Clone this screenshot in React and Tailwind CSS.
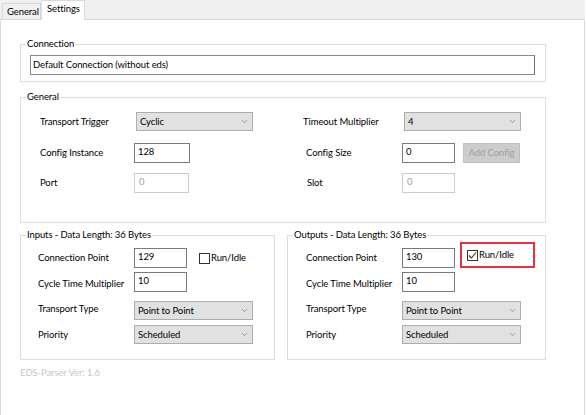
import { ChevronDown } from 'lucide-react'

function Group({ label, className, children }) {
    return (
        <div className={`relative border border-[#dcdcdc] ${className}`}>
            <span className="absolute -top-[8px] left-[5px] bg-white px-px leading-[14px]">{label}</span>
            {children}
        </div>
    )
}

function Select({ value, className }) {
    return (
        <div className={`h-[19px] flex items-center justify-between bg-[#e1e1e1] border border-[#adadad] pl-[3px] pr-[3px] ${className}`}>
            <span>{value}</span>
            <ChevronDown size={9} strokeWidth={1.5} className="text-[#606060]" />
        </div>
    )
}

function Field({ value, disabled, className }) {
    return (
        <div className={`h-[20px] bg-white border leading-[14px] pt-[1px] ${disabled ? 'border-[#cccccc] text-[#a3a3a3] pl-[4px]' : 'border-[#7a7a7a] pl-[3px]'} ${className}`}>
            {value}
        </div>
    )
}

function Check({ checked }) {
    return (
        <div className="flex items-center gap-[1px]">
            <div className="w-[11px] h-[11px] border border-[#333333] bg-white flex items-center justify-center">
                {checked && (
                    <svg width="9" height="9" viewBox="0 0 9 9" fill="none">
                        <path d="M1 4.5 L3.5 7 L8 1.5" stroke="#333333" strokeWidth="1.1" />
                    </svg>
                )}
            </div>
            <span>Run/Idle</span>
        </div>
    )
}

export default function App() {
    return (
        <div className="w-[586px] h-[415px] bg-white text-black text-[9.5px] tracking-[-0.1px] leading-[14px] whitespace-nowrap font-['Lato','Noto_Sans',sans-serif] flex flex-col">
            {/* tabs */}
            <div className="h-[20px] bg-[#f0f0f0] border-b border-[#d9d9d9] flex items-end pl-[2px] w-[585px]">
                <div className="h-[16px] w-[39px] pl-[4px] border border-b-0 border-[#d9d9d9] bg-[#f0f0f0] leading-[15px]">General</div>
                <div className="h-[20px] w-[44px] -mb-px pl-[5px] border border-b-0 border-[#d9d9d9] bg-white leading-[16px]">Settings</div>
            </div>

            <div className="flex-1 w-[585px] border-l border-r border-[#d9d9d9] pl-[19px] pt-[24px]">
                <Group label="Connection" className="w-[526px] h-[38px]">
                    <div className="mt-[10px] ml-[9px] w-[505px] h-[20px] border border-[#8a8a8a] border-r-[#6e6e6e] pl-[2px] pt-[2px]">
                        Default Connection (without eds)
                    </div>
                </Group>

                <Group label="General" className="w-[526px] h-[126px] mt-[15px]">
                    <div className="pl-[19px] pt-[14px] flex flex-col">
                        <div className="flex items-center">
                            <div className="w-[263px] flex items-center">
                                <span className="w-[96px]">Transport Trigger</span>
                                <Select value="Cyclic" className="w-[117px]" />
                            </div>
                            <span className="w-[101px]">Timeout Multiplier</span>
                            <Select value="4" className="w-[117px]" />
                        </div>
                        <div className="flex items-center mt-[12px]">
                            <div className="w-[263px] flex items-center">
                                <span className="w-[94px]">Config Instance</span>
                                <Field value="128" className="w-[56px]" />
                            </div>
                            <span className="w-[99px] pl-[3px]">Config Size</span>
                            <Field value="0" className="w-[53px]" />
                            <div className="ml-[8px] w-[57px] h-[20px] bg-[#cccccc] border border-[#bfbfbf] text-[#a0a0a0] flex items-center justify-center">Add Config</div>
                        </div>
                        <div className="flex items-center mt-[10px]">
                            <div className="w-[263px] flex items-center">
                                <span className="w-[94px]">Port</span>
                                <Field value="0" disabled className="w-[55px]" />
                            </div>
                            <span className="w-[99px] pl-[4px]">Slot</span>
                            <Field value="0" disabled className="w-[53px]" />
                        </div>
                    </div>
                </Group>

                <div className="flex gap-[12px] mt-[12px]">
                    <Group label="Inputs - Data Length: 36 Bytes" className="w-[255px] h-[125px]">
                        <div className="pl-[17px] pt-[12px] flex flex-col">
                            <div className="flex items-center">
                                <span className="w-[96px]">Connection Point</span>
                                <Field value="129" className="w-[53px]" />
                                <div className="ml-[12px]"><Check /></div>
                            </div>
                            <div className="flex items-center mt-[4px]">
                                <span className="w-[96px] pt-[3px]">Cycle Time Multiplier</span>
                                <Field value="10" className="w-[53px]" />
                            </div>
                            <div className="flex items-center mt-[9px]">
                                <span className="w-[96px] -mt-[3px]">Transport Type</span>
                                <Select value="Point to Point" className="w-[119px]" />
                            </div>
                            <div className="flex items-center mt-[5px]">
                                <span className="w-[96px]">Priority</span>
                                <Select value="Scheduled" className="w-[119px]" />
                            </div>
                        </div>
                    </Group>

                    <Group label="Outputs - Data Length: 36 Bytes" className="w-[259px] h-[125px]">
                        <div className="pl-[18px] pt-[12px] flex flex-col">
                            <div className="flex items-start">
                                <span className="w-[96px] mt-[3px]">Connection Point</span>
                                <Field value="130" className="w-[53px]" />
                                <div className="ml-[5px] -mt-[6px] w-[75px] h-[26px] border-2 border-[#e6323e] pl-[5px] flex items-center">
                                    <Check checked />
                                </div>
                            </div>
                            <div className="flex items-center mt-[4px]">
                                <span className="w-[96px] pt-[3px]">Cycle Time Multiplier</span>
                                <Field value="10" className="w-[53px]" />
                            </div>
                            <div className="flex items-center mt-[9px]">
                                <span className="w-[96px] -mt-[3px]">Transport Type</span>
                                <Select value="Point to Point" className="w-[119px]" />
                            </div>
                            <div className="flex items-center mt-[5px]">
                                <span className="w-[96px]">Priority</span>
                                <Select value="Scheduled" className="w-[119px]" />
                            </div>
                        </div>
                    </Group>
                </div>

                <div className="mt-[6px] text-[#c8c8c8]">EDS-Parser Ver: 1.6</div>
            </div>
        </div>
    )
}
